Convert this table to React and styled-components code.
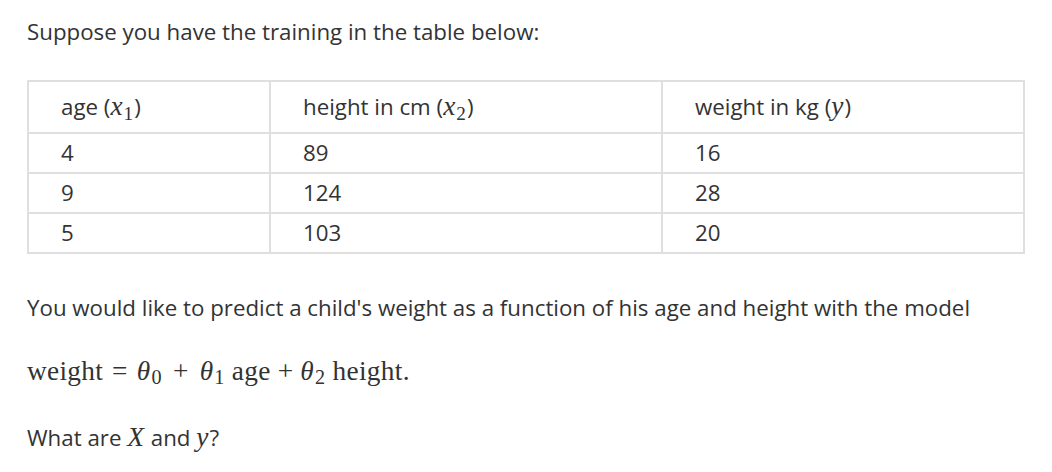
import React from "react";
import styled, { createGlobalStyle } from "styled-components";

const GlobalStyle = createGlobalStyle`
  html, body {
    margin: 0;
    padding: 0;
    background: #fff;
  }
  body {
    font-family: "Open Sans", "Noto Sans", sans-serif;
    color: #333;
  }
  *, *::before, *::after {
    box-sizing: border-box;
  }
`;

const rows = [
  { age: "4", height: "89", weight: "16" },
  { age: "9", height: "124", weight: "28" },
  { age: "5", height: "103", weight: "20" },
];

const Page = styled.main`
  padding: 17px 27px 0 27px;
  width: 1052px;
`;

const Para = styled.p`
  margin: 0 0 ${(p) => p.$gap || 0}px 0;
  font-size: 22.3px;
  line-height: 30px;
`;

const Table = styled.table`
  border-collapse: collapse;
  width: 998px;
  table-layout: fixed;
  margin-bottom: 39px;
  font-size: 22.3px;
  line-height: 30px;
`;

const Th = styled.th`
  border: 2px solid #dfdfdf;
  text-align: left;
  font-weight: 400;
  padding: 9px 30px 10px 32px;
  height: 52px;
  width: ${(p) => (p.$w ? `${p.$w}px` : "auto")};
  white-space: nowrap;
`;

const Td = styled.td`
  border: 2px solid #dfdfdf;
  padding: 4px 30px 4px 32px;
  height: 40px;
`;

const MathVar = styled.span`
  font-family: "Liberation Serif", "Times New Roman", serif;
  font-style: italic;
  font-size: 1.23em;
  line-height: 0;
  margin-right: 1px;
`;

const Sub = styled.span`
  font-family: "Liberation Serif", "Times New Roman", serif;
  font-style: normal;
  font-size: ${(p) => p.$size || 0.74}em;
  vertical-align: ${(p) => p.$drop || -0.22}em;
  line-height: 0;
  margin-left: 1px;
`;

const Formula = styled.p`
  margin: 0 0 37px 0;
  font-family: "Liberation Serif", "Times New Roman", serif;
  font-size: 27.3px;
  letter-spacing: 0.3px;
  line-height: 30px;
  color: #333;
  white-space: nowrap;
`;

const Op = styled.span`
  padding: 0 ${(p) => p.$pad || 6}px;
`;

const Theta = styled.span`
  font-style: italic;
`;

const Paren = styled.span`
  font-family: "Open Sans", sans-serif;
`;

const Var = ({ name, sub }) => (
  <MathVar>
    {name}
    {sub && (
      <Sub $size={0.7} $drop={-0.3}>
        {sub}
      </Sub>
    )}
  </MathVar>
);

export default function App() {
  return (
    <Page>
      <GlobalStyle />
      <Para $gap={33}>Suppose you have the training in the table below:</Para>

      <Table>
        <thead>
          <tr>
            <Th $w={242}>
              age <Paren>(</Paren>
              <Var name="x" sub="1" />
              <Paren>)</Paren>
            </Th>
            <Th $w={392}>
              height in cm <Paren>(</Paren>
              <Var name="x" sub="2" />
              <Paren>)</Paren>
            </Th>
            <Th>
              weight in kg <Paren>(</Paren>
              <Var name="y" />
              <Paren>)</Paren>
            </Th>
          </tr>
        </thead>
        <tbody>
          {rows.map((r) => (
            <tr key={r.age}>
              <Td>{r.age}</Td>
              <Td>{r.height}</Td>
              <Td>{r.weight}</Td>
            </tr>
          ))}
        </tbody>
      </Table>

      <Para $gap={33}>
        You would like to predict a child's weight as a function of his age and
        height with the model
      </Para>

      <Formula>
        weight
        <Op $pad={9}>=</Op>
        <Theta>θ</Theta>
        <Sub>0</Sub>
        <Op $pad={11}>+</Op>
        <Theta>θ</Theta>
        <Sub>1</Sub> age
        <Op $pad={7}>+</Op>
        <Theta>θ</Theta>
        <Sub>2</Sub> height.
      </Formula>

      <Para>
        What are <MathVar>X</MathVar> and <MathVar>y</MathVar>?
      </Para>
    </Page>
  );
}
